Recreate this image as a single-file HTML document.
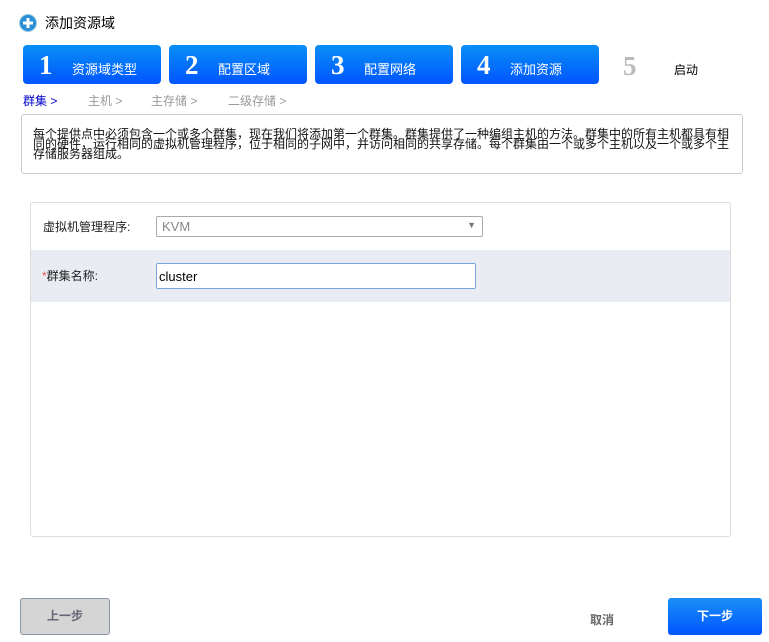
<!DOCTYPE html>
<html><head><meta charset="utf-8"><style>
*{margin:0;padding:0;box-sizing:border-box}
body{width:769px;height:642px;background:#fff;font-family:"Liberation Sans","Noto Sans CJK SC",sans-serif;position:relative;overflow:hidden;color:#000}
.a{position:absolute}
.step{position:absolute;top:45px;width:138px;height:39px;border-radius:4px;background:linear-gradient(#0a8ff5,#0055ff);color:#fff}
.step b{position:absolute;left:16px;top:5px;font:bold 27px "Liberation Serif",serif}
.step span{position:absolute;left:49px;top:14px;font-size:13px}
.crumb{position:absolute;top:92px;font-size:12px;color:#999}
</style></head><body>
<svg class="a" style="left:18px;top:13px" width="20" height="20"><circle cx="10" cy="10" r="8.5" fill="#2a8fd6" stroke="#9cd" stroke-width="1"/><rect x="5" y="8.5" width="10" height="3" fill="#fff"/><rect x="8.5" y="5" width="3" height="10" fill="#fff"/></svg>
<div class="a" style="left:45px;top:13px;font-size:14px">添加资源域</div>
<div class="step" style="left:23px"><b>1</b><span>资源域类型</span></div>
<div class="step" style="left:169px"><b>2</b><span>配置区域</span></div>
<div class="step" style="left:315px"><b>3</b><span>配置网络</span></div>
<div class="step" style="left:461px"><b>4</b><span>添加资源</span></div>
<div class="a" style="left:623px;top:51px;font:bold 27px 'Liberation Serif',serif;color:#bbb">5</div>
<div class="a" style="left:674px;top:61px;font-size:12px">启动</div>
<div class="crumb" style="left:23px;color:#0000cc">群集 &gt;</div>
<div class="crumb" style="left:88px">主机 &gt;</div>
<div class="crumb" style="left:151px">主存储 &gt;</div>
<div class="crumb" style="left:228px">二级存储 &gt;</div>
<div class="a" style="left:21px;top:114px;width:722px;height:60px;border:1px solid #ccc;border-radius:3px;padding:14px 11px 0;font-size:12px;line-height:10px;color:#111">每个提供点中必须包含一个或多个群集，现在我们将添加第一个群集。群集提供了一种编组主机的方法。群集中的所有主机都具有相同的硬件，运行相同的虚拟机管理程序，位于相同的子网中，并访问相同的共享存储。每个群集由一个或多个主机以及一个或多个主存储服务器组成。</div>
<div class="a" style="left:30px;top:202px;width:701px;height:335px;border:1px solid #ddd;border-radius:3px"></div>
<div class="a" style="left:43px;top:218px;font-size:12px;color:#222">虚拟机管理程序:</div>
<div class="a" style="left:156px;top:216px;width:327px;height:21px;border:1px solid #aaa;border-radius:2px;font-size:13px;color:#888;padding:2px 5px">KVM<span style="position:absolute;right:6px;top:3px;font-size:9px;color:#777">▼</span></div>
<div class="a" style="left:31px;top:250px;width:699px;height:52px;background:#e9ecf3"></div>
<div class="a" style="left:42px;top:267px;font-size:12px;color:#222"><span style="color:#e55">*</span>群集名称:</div>
<div class="a" style="left:156px;top:263px;width:320px;height:26px;border:1px solid #7aa4e0;border-radius:2px;background:#fff;font-size:13px;padding:5px 2px">cluster</div>
<div class="a" style="left:20px;top:598px;width:90px;height:37px;background:#d5d5d5;border:1px solid #8a97a8;border-radius:3px;font-size:12px;font-weight:bold;color:#667;text-align:center;line-height:35px">上一步</div>
<div class="a" style="left:590px;top:611px;font-size:12px;font-weight:bold;color:#666">取消</div>
<div class="a" style="left:668px;top:598px;width:94px;height:37px;background:linear-gradient(#1a8ff5,#0055ff);border-radius:3px;font-size:12px;font-weight:bold;color:#fff;text-align:center;line-height:37px">下一步</div>
</body></html>
